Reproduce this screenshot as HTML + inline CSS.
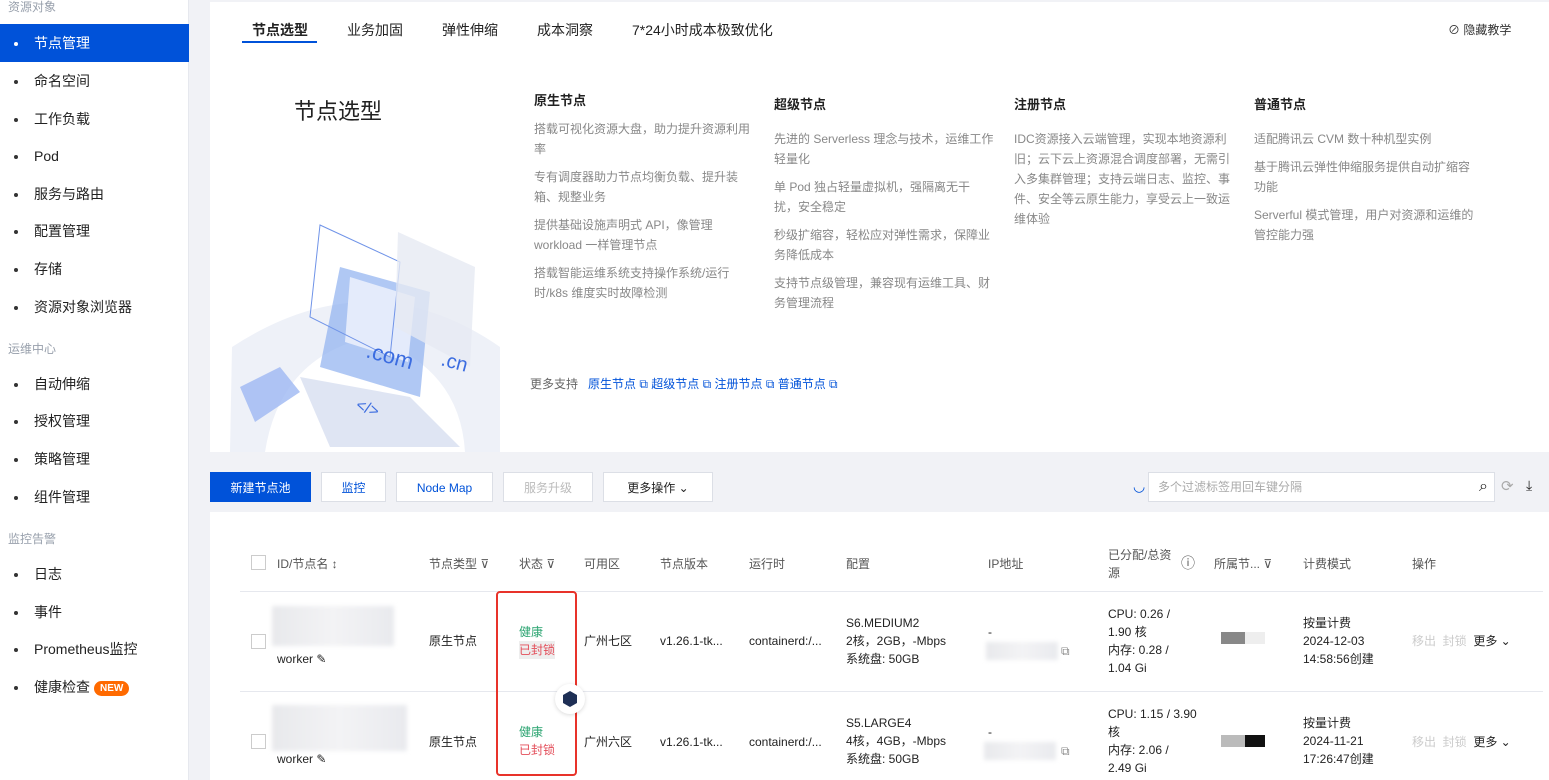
<!DOCTYPE html>
<html><head><meta charset="utf-8"><style>
*{margin:0;padding:0;box-sizing:border-box}
body{width:1549px;height:780px;overflow:hidden;background:#f1f2f6;font-family:"Liberation Sans","Noto Sans CJK SC",sans-serif;color:#222;position:relative}
.a{position:absolute;white-space:nowrap}
#side{position:absolute;left:0;top:0;width:189px;height:780px;background:#fff;border-right:1px solid #e6e8ee}
.grp{position:absolute;left:8px;font-size:12px;color:#98a0ac}
.it{position:absolute;left:0;width:189px;height:38px;line-height:38px;font-size:14px;color:#222;padding-left:34px}
.it:before{content:"";position:absolute;left:14px;top:18px;width:4px;height:4px;border-radius:50%;background:#333}
.it.on{background:#0052d9;color:#fff}
.it.on:before{background:#fff}
.new{display:inline-block;background:#ff6a00;color:#fff;font-size:10px;font-weight:bold;border-radius:8px;padding:0 6px;line-height:15px;margin-left:4px;vertical-align:1px}
#top{position:absolute;left:210px;top:2px;width:1339px;height:450px;background:#fff}
.tab{position:absolute;top:18px;font-size:14px;color:#222}
.h{font-size:13px;font-weight:bold;color:#222}
.d{font-size:12px;color:#888;line-height:20px;white-space:normal;width:220px}
.d p{margin-bottom:8px}
.lk{color:#0052d9;font-size:12px}
.btn{position:absolute;top:472px;height:30px;line-height:30px;text-align:center;font-size:12px;background:#fff;border:1px solid #dcdfe6;color:#0052d9}
#tbl{position:absolute;left:210px;top:512px;width:1339px;height:268px;background:#fff}
.th{position:absolute;top:43px;font-size:12px;color:#555}
.td{position:absolute;font-size:12px;color:#222;line-height:18px}
.cb{position:absolute;width:15px;height:15px;border:1px solid #ccc;background:#fff}
.blur{position:absolute;background:linear-gradient(90deg,#e8e9ec,#f3f3f5,#e9eaee);filter:blur(2px)}
</style></head><body>
<div id="side">
<div class="grp" style="top:-2px">资源对象</div>
<div class="it on" style="top:24px">节点管理</div>
<div class="it" style="top:62px">命名空间</div>
<div class="it" style="top:100px">工作负载</div>
<div class="it" style="top:137px">Pod</div>
<div class="it" style="top:175px">服务与路由</div>
<div class="it" style="top:212px">配置管理</div>
<div class="it" style="top:250px">存储</div>
<div class="it" style="top:288px">资源对象浏览器</div>
<div class="grp" style="top:340px">运维中心</div>
<div class="it" style="top:365px">自动伸缩</div>
<div class="it" style="top:402px">授权管理</div>
<div class="it" style="top:440px">策略管理</div>
<div class="it" style="top:478px">组件管理</div>
<div class="grp" style="top:530px">监控告警</div>
<div class="it" style="top:555px">日志</div>
<div class="it" style="top:593px">事件</div>
<div class="it" style="top:630px">Prometheus监控</div>
<div class="it" style="top:668px">健康检查<span class="new">NEW</span></div>
</div>

<div id="top">
<div class="tab" style="left:42px;font-weight:bold">节点选型</div>
<div style="position:absolute;left:32px;top:39px;width:75px;height:2px;background:#0052d9"></div>
<div class="tab" style="left:137px">业务加固</div>
<div class="tab" style="left:232px">弹性伸缩</div>
<div class="tab" style="left:327px">成本洞察</div>
<div class="tab" style="left:422px">7*24小时成本极致优化</div>
<div class="a" style="left:1238px;top:19px;font-size:12px;color:#333">⊘ 隐藏教学</div>
<div class="a" style="left:84px;top:92px;font-size:22px;color:#222">节点选型</div>
<svg class="a" style="left:10px;top:215px" width="290" height="235" viewBox="0 0 290 235">
<path d="M12 130 Q150 40 280 130 L280 235 L245 235 Q240 150 150 120 Q60 140 45 235 L10 235Z" fill="#eef1f8"/>
<path d="M120 50 L210 75 L200 180 L100 150Z" fill="#8fb0f0" opacity=".7"/>
<path d="M130 60 L195 80 L188 145 L125 125Z" fill="#e4ebfb"/>
<path d="M100 8 L180 45 L170 140 L90 100Z" fill="none" stroke="#6f93e8"/>
<path d="M178 15 L255 50 L250 150 L175 110Z" fill="#e6eaf2" opacity=".8"/>
<text x="145" y="140" font-size="22" fill="#3b6ce0" transform="rotate(15 145 140)">.com</text>
<text x="220" y="148" font-size="20" fill="#3b6ce0" transform="rotate(15 220 148)">.cn</text>
<path d="M80 160 L190 180 L240 230 L110 230Z" fill="#dfe5f3"/>
<text x="135" y="192" font-size="16" fill="#3b6ce0" transform="rotate(20 135 192)">&lt;/&gt;</text>
<path d="M20 170 L60 150 L80 175 L35 205Z" fill="#9db8f2" opacity=".8"/>
</svg>
<div class="a" style="left:324px;top:88px"><div class="h">原生节点</div><div class="d" style="margin-top:10px"><p>搭载可视化资源大盘，助力提升资源利用率</p><p>专有调度器助力节点均衡负载、提升装箱、规整业务</p><p>提供基础设施声明式 API，像管理 workload 一样管理节点</p><p>搭载智能运维系统支持操作系统/运行时/k8s 维度实时故障检测</p></div></div>
<div class="a" style="left:564px;top:92px"><div class="h">超级节点</div><div class="d" style="margin-top:16px"><p>先进的 Serverless 理念与技术，运维工作轻量化</p><p>单 Pod 独占轻量虚拟机，强隔离无干扰，安全稳定</p><p>秒级扩缩容，轻松应对弹性需求，保障业务降低成本</p><p>支持节点级管理，兼容现有运维工具、财务管理流程</p></div></div>
<div class="a" style="left:804px;top:92px"><div class="h">注册节点</div><div class="d" style="margin-top:16px"><p>IDC资源接入云端管理，实现本地资源利旧；云下云上资源混合调度部署，无需引入多集群管理；支持云端日志、监控、事件、安全等云原生能力，享受云上一致运维体验</p></div></div>
<div class="a" style="left:1044px;top:92px"><div class="h">普通节点</div><div class="d" style="margin-top:16px"><p>适配腾讯云 CVM 数十种机型实例</p><p>基于腾讯云弹性伸缩服务提供自动扩缩容功能</p><p>Serverful 模式管理，用户对资源和运维的管控能力强</p></div></div>
<div class="a" style="left:320px;top:373px;font-size:12px;color:#666">更多支持 &nbsp;&nbsp;<span class="lk">原生节点 ⧉ 超级节点 ⧉ 注册节点 ⧉ 普通节点 ⧉</span></div>
</div>

<div class="btn" style="left:210px;width:101px;background:#0052d9;color:#fff;border-color:#0052d9">新建节点池</div>
<div class="btn" style="left:321px;width:65px">监控</div>
<div class="btn" style="left:396px;width:97px">Node Map</div>
<div class="btn" style="left:503px;width:90px;color:#bbb">服务升级</div>
<div class="btn" style="left:603px;width:110px;color:#222">更多操作 ⌄</div>
<div class="a" style="left:1133px;top:478px;font-size:14px;color:#0052d9">◡</div>
<div class="a" style="left:1148px;top:472px;width:347px;height:30px;background:#fff;border:1px solid #dcdfe6;font-size:12px;color:#aaa;line-height:28px;padding-left:9px">多个过滤标签用回车键分隔<span style="position:absolute;right:6px;font-size:16px;color:#222">⌕</span></div>
<div class="a" style="left:1501px;top:477px;font-size:15px;color:#aaa">⟳</div>
<div class="a" style="left:1526px;top:477px;font-size:14px;color:#222">⤓</div>

<div id="tbl">
<div class="cb" style="left:41px;top:43px"></div>
<div class="th" style="left:67px">ID/节点名 ↕</div>
<div class="th" style="left:219px">节点类型 ⊽</div>
<div class="th" style="left:309px">状态 ⊽</div>
<div class="th" style="left:374px">可用区</div>
<div class="th" style="left:450px">节点版本</div>
<div class="th" style="left:539px">运行时</div>
<div class="th" style="left:636px">配置</div>
<div class="th" style="left:778px">IP地址</div>
<div class="th" style="left:898px;top:34px;line-height:18px">已分配/总资<br>源</div>
<div class="th" style="left:971px;font-size:14px;top:41px">ⓘ</div>
<div class="th" style="left:1004px">所属节... ⊽</div>
<div class="th" style="left:1093px">计费模式</div>
<div class="th" style="left:1202px">操作</div>
<div class="a" style="left:30px;top:79px;width:1303px;height:1px;background:#e6e8ee"></div>
<div class="a" style="left:30px;top:179px;width:1303px;height:1px;background:#e6e8ee"></div>

<div class="blur" style="left:62px;top:94px;width:122px;height:40px"></div>
<div class="cb" style="left:41px;top:122px"></div>
<div class="td" style="left:67px;top:138px">worker ✎</div>
<div class="td" style="left:219px;top:120px">原生节点</div>
<div class="td" style="left:309px;top:111px;color:#2ba471">健康</div>
<div class="td" style="left:309px;top:129px;color:#e34d59;background:#eee">已封锁</div>
<div class="td" style="left:374px;top:120px">广州七区</div>
<div class="td" style="left:450px;top:120px">v1.26.1-tk...</div>
<div class="td" style="left:539px;top:120px">containerd:/...</div>
<div class="td" style="left:636px;top:102px">S6.MEDIUM2<br>2核，2GB，-Mbps<br>系统盘: 50GB</div>
<div class="td" style="left:778px;top:111px">-</div>
<div class="blur" style="left:776px;top:130px;width:72px;height:18px"></div>
<div class="td" style="left:851px;top:130px;color:#888">⧉</div>
<div class="td" style="left:898px;top:93px">CPU: 0.26 /<br>1.90 核<br>内存: 0.28 /<br>1.04 Gi</div>
<div class="a" style="left:1011px;top:120px;width:24px;height:12px;background:#888"></div>
<div class="a" style="left:1035px;top:120px;width:20px;height:12px;background:#eee"></div>
<div class="td" style="left:1093px;top:102px">按量计费<br>2024-12-03<br>14:58:56创建</div>
<div class="td" style="left:1202px;top:120px;color:#ccc">移出 &nbsp;封锁 <span style="color:#222">&nbsp;更多 ⌄</span></div>

<div class="blur" style="left:62px;top:193px;width:135px;height:46px"></div>
<div class="cb" style="left:41px;top:222px"></div>
<div class="td" style="left:67px;top:238px">worker ✎</div>
<div class="td" style="left:219px;top:221px">原生节点</div>
<div class="td" style="left:309px;top:211px;color:#2ba471">健康</div>
<div class="td" style="left:309px;top:229px;color:#e34d59">已封锁</div>
<div class="td" style="left:374px;top:221px">广州六区</div>
<div class="td" style="left:450px;top:221px">v1.26.1-tk...</div>
<div class="td" style="left:539px;top:221px">containerd:/...</div>
<div class="td" style="left:636px;top:202px">S5.LARGE4<br>4核，4GB，-Mbps<br>系统盘: 50GB</div>
<div class="td" style="left:778px;top:211px">-</div>
<div class="blur" style="left:774px;top:230px;width:72px;height:18px"></div>
<div class="td" style="left:851px;top:230px;color:#888">⧉</div>
<div class="td" style="left:898px;top:193px">CPU: 1.15 / 3.90<br>核<br>内存: 2.06 /<br>2.49 Gi</div>
<div class="a" style="left:1011px;top:223px;width:24px;height:12px;background:#bbb"></div>
<div class="a" style="left:1035px;top:223px;width:20px;height:12px;background:#111"></div>
<div class="td" style="left:1093px;top:202px">按量计费<br>2024-11-21<br>17:26:47创建</div>
<div class="td" style="left:1202px;top:221px;color:#ccc">移出 &nbsp;封锁 <span style="color:#222">&nbsp;更多 ⌄</span></div>
</div>
<div class="a" style="left:496px;top:591px;width:81px;height:185px;border:2px solid #e8332a;border-radius:4px"></div>
<div class="a" style="left:555px;top:684px;width:30px;height:30px;border-radius:50%;background:#fff;box-shadow:0 1px 4px rgba(0,0,0,.15)"><div style="position:absolute;left:8px;top:7px;width:14px;height:16px;background:#1e2f55;clip-path:polygon(50% 0,100% 25%,100% 75%,50% 100%,0 75%,0 25%)"></div></div>
</body></html>
